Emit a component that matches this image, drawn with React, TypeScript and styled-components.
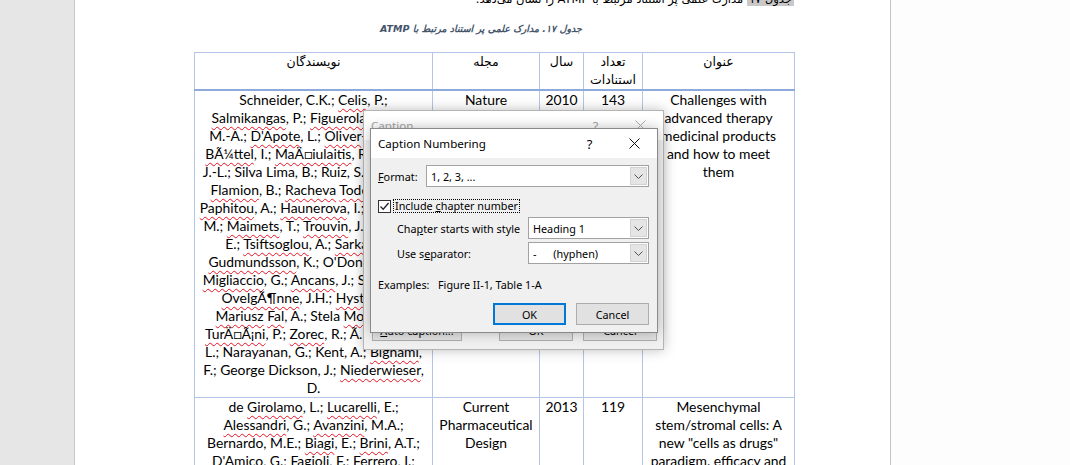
import styled, { createGlobalStyle } from "styled-components";

const GlobalStyle = createGlobalStyle`
  html, body {
    margin: 0;
    padding: 0;
  }
  body {
    width: 1070px;
    height: 465px;
    overflow: hidden;
    background: #fff;
  }
`;

const Screen = styled.div`
  position: relative;
  display: flex;
  width: 1070px;
  height: 465px;
  overflow: hidden;
`;

const Gutter = styled.div`
  flex-shrink: 0;
  width: 74px;
  background: #e6e6e6;
  border-right: 1px solid #c6c6c6;
`;

const Page = styled.div`
  flex-shrink: 0;
  box-sizing: border-box;
  width: 816px;
  padding: 0 96px 0 119px;
  background: #fff;
  border-right: 1px solid #c3c3c3;
`;

const SidePane = styled.div`
  flex: 1;
  background: #fdfdfd;
`;

const TopLine = styled.p`
  margin: -9px 0 0;
  direction: rtl;
  text-align: right;
  font-family: "DejaVu Sans", sans-serif;
  font-size: 11.5px;
  line-height: 17px;
  white-space: nowrap;
  color: #000;
`;

const Mark = styled.span`
  padding: 0 2px;
  background: #c8c8c8;
`;

const Caption = styled.p`
  margin: 13px 0 0;
  padding-right: 26px;
  direction: rtl;
  text-align: center;
  font-family: "DejaVu Sans", sans-serif;
  font-size: 9.5px;
  font-weight: bold;
  font-style: italic;
  line-height: 16px;
  color: #44546a;
`;

const Table = styled.table`
  margin-top: 15px;
  width: 600px;
  border-collapse: collapse;
  table-layout: fixed;
`;

const HeadCell = styled.th`
  padding: 0 4px;
  vertical-align: top;
  border: 1px solid #b4c6e7;
  border-bottom: 2px solid #8eaadb;
  direction: rtl;
  text-align: center;
  font-family: "DejaVu Sans", sans-serif;
  font-size: 12.5px;
  font-weight: normal;
  line-height: 18px;
  color: #000;
`;

const Cell = styled.td`
  padding: 0 4px;
  vertical-align: top;
  border: 1px solid #b4c6e7;
  text-align: center;
  font-family: Lato, "Liberation Sans", "DejaVu Sans", sans-serif;
  font-size: 13.9px;
  line-height: 18px;
  color: #000;
`;

const Line = styled.div`
  white-space: nowrap;
`;

const Misspelt = styled.span`
  text-decoration: underline wavy #e81123;
  text-decoration-thickness: 1px;
  text-decoration-skip-ink: none;
  text-underline-offset: 3px;
`;

const Dialog = styled.div<{ $inactive?: boolean }>`
  position: absolute;
  box-sizing: border-box;
  display: flex;
  flex-direction: column;
  background: #f0f0f0;
  border: 1px solid ${(p) => (p.$inactive ? "#b4b4b4" : "#8a8a8a")};
  box-shadow: 0 0 12px rgba(0, 0, 0, 0.26);
  font-family: "Noto Sans", "Open Sans", sans-serif;
  font-size: 10.8px;
  color: #000;
`;

const CaptionDialog = styled(Dialog)`
  left: 363px;
  top: 110px;
  width: 301px;
  height: 240px;
`;

const NumberingDialog = styled(Dialog)`
  left: 370px;
  top: 128px;
  width: 288px;
  height: 205px;
`;

const TitleBar = styled.div<{ $inactive?: boolean }>`
  display: flex;
  align-items: center;
  height: 29px;
  padding-left: 7px;
  background: #fff;
  color: ${(p) => (p.$inactive ? "#a6a6a6" : "#000")};
  font-size: 11.6px;
`;

const Title = styled.span`
  flex: 1;
`;

const TitleButton = styled.span`
  display: flex;
  align-items: center;
  justify-content: center;
  width: 45px;
  height: 29px;
  font-size: 13px;
`;

const DialogBody = styled.div`
  display: flex;
  flex-direction: column;
  flex: 1;
  padding: 7px 8px 7px 6px;
`;

const Row = styled.div<{ $indent?: number; $gap?: number }>`
  display: flex;
  align-items: center;
  padding-left: ${(p) => p.$indent ?? 0}px;
  margin-top: ${(p) => p.$gap ?? 0}px;
`;

const Label = styled.span<{ $width?: number }>`
  flex: ${(p) => (p.$width ? "none" : "1")};
  width: ${(p) => (p.$width ? `${p.$width}px` : "auto")};
  white-space: nowrap;
`;

const Key = styled.span`
  text-decoration: underline;
  text-underline-offset: 1px;
`;

const Combo = styled.div<{ $width?: number }>`
  display: flex;
  box-sizing: border-box;
  flex: ${(p) => (p.$width ? "none" : "1")};
  width: ${(p) => (p.$width ? `${p.$width}px` : "auto")};
  height: 22px;
  background: #fff;
  border: 1px solid #a2a2a2;
`;

const ComboValue = styled.span`
  flex: 1;
  display: flex;
  align-items: center;
  padding-left: 4px;
  white-space: pre;
`;

const DropButton = styled.span`
  display: flex;
  align-items: center;
  justify-content: center;
  width: 15px;
  margin: 1px;
  background: #e5e5e5;
  border: 1px solid #d2d2d2;
`;

const CheckBox = styled.span`
  display: flex;
  align-items: center;
  justify-content: center;
  box-sizing: border-box;
  width: 13px;
  height: 13px;
  margin-left: 1px;
  margin-right: 2px;
  background: #fff;
  border: 1px solid #333;
`;

const FocusLabel = styled.span`
  padding: 0 1px;
  line-height: 12px;
  border: 1px dotted #000;
  white-space: nowrap;
`;

const ButtonRow = styled.div<{ $spread?: boolean }>`
  display: flex;
  justify-content: ${(p) => (p.$spread ? "space-between" : "flex-end")};
  gap: 10px;
  margin-top: auto;
`;

const ButtonGroup = styled.div`
  display: flex;
  gap: 10px;
`;

const Button = styled.span<{ $width?: number; $default?: boolean }>`
  display: flex;
  align-items: center;
  justify-content: center;
  box-sizing: border-box;
  width: ${(p) => p.$width ?? 73}px;
  height: 22px;
  background: #e1e1e1;
  border: ${(p) => (p.$default ? "2px solid #0078d7" : "1px solid #adadad")};
  white-space: nowrap;
`;

const CaptionFooter = styled.div`
  display: flex;
  flex-direction: column;
  flex: 1;
  padding: 0 6px 8px 8px;
  color: #000;
`;

const Chevron = () => (
  <svg width="9" height="5" viewBox="0 0 9 5">
    <path d="M0.5 0.5 L4.5 4.5 L8.5 0.5" fill="none" stroke="#505050" strokeWidth="1" />
  </svg>
);

const CloseIcon = ({ color }: { color: string }) => (
  <svg width="11" height="11" viewBox="0 0 11 11">
    <path d="M0.5 0.5 L10.5 10.5 M10.5 0.5 L0.5 10.5" stroke={color} strokeWidth="1" />
  </svg>
);

const CheckMark = () => (
  <svg width="11" height="11" viewBox="0 0 11 11">
    <path d="M1.5 5.5 L4.2 8.2 L9.6 2" fill="none" stroke="#222" strokeWidth="1.3" />
  </svg>
);

// words between ~ get the spell-check squiggle
const Text = ({ value }: { value: string }) => (
  <Line>
    {value.split("~").map((part, i) =>
      i % 2 ? <Misspelt key={i}>{part}</Misspelt> : <span key={i}>{part}</span>
    )}
  </Line>
);

const Lines = ({ items }: { items: string[] }) => (
  <>
    {items.map((l, i) => (
      <Text key={i} value={l} />
    ))}
  </>
);

const rows = [
  {
    authors: [
      "Schneider, C.K.; ~Celis~, P.;",
      "~Salmikangas~, P.; ~Figuerola~-Santos,",
      "M.-A.; ~D'Apote~, L.; ~Oliver~-Diaz, O.;",
      "~BÃ¼ttel~, I.; ~MaÄ\u25A1iulaitis~, R.; Robert,",
      "J.-L.; Silva Lima, B.; Ruiz, S.; Jilma, B.;",
      "~Flamion~, B.; ~Racheva~ ~Todorova~, L.;",
      "~Paphitou~, A.; ~Haunerova~, I.; Georgiou,",
      "M.; ~Maimets~, T.; ~Trouvin~, J.-H.; Flory,",
      "E.; ~Tsiftsoglou~, A.; ~Sarkadi~, B.;",
      "~Gudmundsson~, K.; O'Donovan, M.;",
      "~Migliaccio~, G.; ~Ancans~, J.; Samuel, A.;",
      "~OvelgÃ¶nne~, J.H.; ~Hystad~, M.;",
      "~Mariusz~ ~Fal~, A.; Stela ~Moraru~, A.;",
      "~TurÄ\u25A1Ã¡ni~, P.; ~Zorec~, R.; Ã\u2026kerblom,",
      "L.; Narayanan, G.; Kent, A.; ~Bignami~,",
      "F.; George Dickson, J.; ~Niederwieser~,",
      "D.",
    ],
    journal: ["Nature"],
    year: "2010",
    cited: "143",
    title: ["Challenges with", "advanced therapy", "medicinal products", "and how to meet", "them"],
  },
  {
    authors: [
      "de ~Girolamo~, L.; ~Lucarelli~, E.;",
      "~Alessandri~, G.; ~Avanzini~, M.A.;",
      "Bernardo, M.E.; ~Biagi~, E.; ~Brini~, A.T.;",
      "D'Amico, G.; ~Fagioli~, F.; Ferrero, I.;",
      "~Locatelli~, F.; ~Maccario~, R.;",
      "~Marazzi~, M.; ~Parolini~, O.;",
    ],
    journal: ["Current", "Pharmaceutical", "Design"],
    year: "2013",
    cited: "119",
    title: ["Mesenchymal", "stem/stromal cells: A", 'new "cells as drugs"', "paradigm. efficacy and", "critical aspects in cell"],
  },
];

export default function App() {
  return (
    <>
      <GlobalStyle />
      <Screen>
        <Gutter />
        <Page>
          <TopLine>
            <Mark>جدول ۱۷</Mark> مدارک علمی پر استناد مرتبط با ATMP را نشان می‌دهد.
          </TopLine>
          <Caption>جدول ۱۷. مدارک علمی پر استناد مرتبط با ATMP</Caption>
          <Table>
            <colgroup>
              <col style={{ width: 238 }} />
              <col style={{ width: 107 }} />
              <col style={{ width: 44 }} />
              <col style={{ width: 59 }} />
              <col style={{ width: 152 }} />
            </colgroup>
            <thead>
              <tr>
                <HeadCell>نویسندگان</HeadCell>
                <HeadCell>مجله</HeadCell>
                <HeadCell>سال</HeadCell>
                <HeadCell>
                  تعداد
                  <br />
                  استنادات
                </HeadCell>
                <HeadCell>عنوان</HeadCell>
              </tr>
            </thead>
            <tbody>
              {rows.map((r) => (
                <tr key={r.year}>
                  <Cell>
                    <Lines items={r.authors} />
                  </Cell>
                  <Cell>
                    <Lines items={r.journal} />
                  </Cell>
                  <Cell>{r.year}</Cell>
                  <Cell>{r.cited}</Cell>
                  <Cell>
                    <Lines items={r.title} />
                  </Cell>
                </tr>
              ))}
            </tbody>
          </Table>
        </Page>
        <SidePane />

        <CaptionDialog $inactive>
          <TitleBar $inactive>
            <Title>Caption</Title>
            <TitleButton>?</TitleButton>
            <TitleButton>
              <CloseIcon color="#b0b0b0" />
            </TitleButton>
          </TitleBar>
          <CaptionFooter>
            <ButtonRow $spread>
              <Button $width={90}>
                <Key>A</Key>uto caption...
              </Button>
              <ButtonGroup>
                <Button $width={74}>OK</Button>
                <Button $width={74}>Cancel</Button>
              </ButtonGroup>
            </ButtonRow>
          </CaptionFooter>
        </CaptionDialog>

        <NumberingDialog>
          <TitleBar>
            <Title>Caption Numbering</Title>
            <TitleButton>?</TitleButton>
            <TitleButton>
              <CloseIcon color="#111" />
            </TitleButton>
          </TitleBar>
          <DialogBody>
            <Row $indent={1}>
              <Label $width={48}>
                <Key>F</Key>ormat:
              </Label>
              <Combo>
                <ComboValue>1, 2, 3, ...</ComboValue>
                <DropButton>
                  <Chevron />
                </DropButton>
              </Combo>
            </Row>
            <Row $gap={12}>
              <CheckBox>
                <CheckMark />
              </CheckBox>
              <FocusLabel>
                Include <Key>c</Key>hapter number
              </FocusLabel>
            </Row>
            <Row $indent={20} $gap={4}>
              <Label>
                Cha<Key>p</Key>ter starts with style
              </Label>
              <Combo $width={121}>
                <ComboValue>Heading 1</ComboValue>
                <DropButton>
                  <Chevron />
                </DropButton>
              </Combo>
            </Row>
            <Row $indent={20} $gap={3}>
              <Label>
                Use s<Key>e</Key>parator:
              </Label>
              <Combo $width={121}>
                <ComboValue>{"-      (hyphen)"}</ComboValue>
                <DropButton>
                  <Chevron />
                </DropButton>
              </Combo>
            </Row>
            <Row $indent={1} $gap={13}>
              <Label $width={60}>Examples:</Label>
              <Label>Figure II-1, Table 1-A</Label>
            </Row>
            <ButtonRow>
              <Button $default>OK</Button>
              <Button>Cancel</Button>
            </ButtonRow>
          </DialogBody>
        </NumberingDialog>
      </Screen>
    </>
  );
}
